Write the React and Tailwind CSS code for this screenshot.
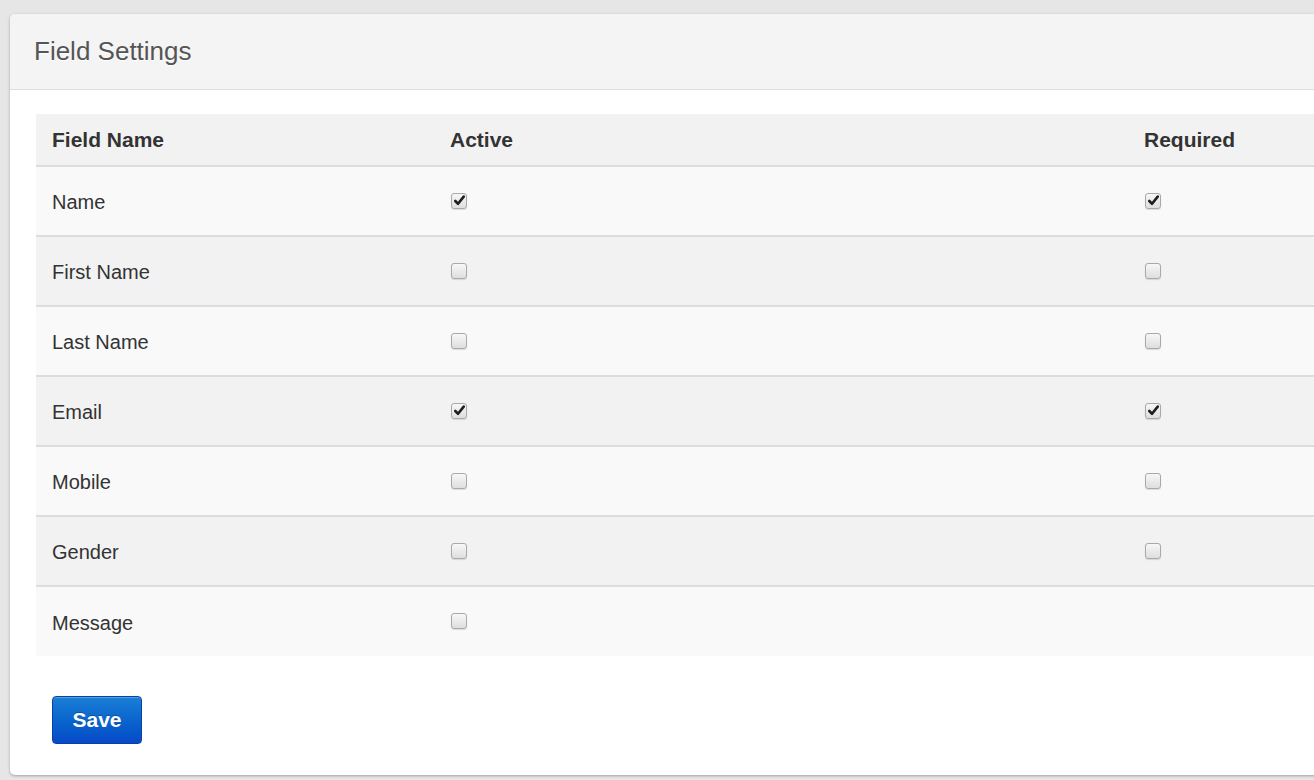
const fields = [
  { name: "Name", active: true, required: true },
  { name: "First Name", active: false, required: false },
  { name: "Last Name", active: false, required: false },
  { name: "Email", active: true, required: true },
  { name: "Mobile", active: false, required: false },
  { name: "Gender", active: false, required: false },
  { name: "Message", active: false, required: null },
];

function Checkbox({ checked }) {
  return (
    <span className="flex h-[16px] w-[16px] items-center justify-center rounded-[3px] border border-[#a9a9a9] bg-gradient-to-b from-[#f7f7f7] to-[#dedede] shadow-[0_1px_1px_rgba(0,0,0,0.12)]">
      {checked && (
        <svg viewBox="0 0 16 16" className="h-[13px] w-[13px]">
          <path d="M2.8 8.6 L6.2 12 L13.2 3.2" fill="none" stroke="#1e1e1e" strokeWidth="3.2" strokeLinecap="round" strokeLinejoin="round" />
        </svg>
      )}
    </span>
  );
}

export default function App() {
  return (
    <div className="h-[780px] w-full overflow-hidden bg-[#e6e6e6] pt-[14px] pl-[10px] font-['Liberation_Sans',Arial,sans-serif] text-[#333]">
      <div className="w-[1340px] rounded-[5px] bg-white shadow-[0_1px_3px_rgba(0,0,0,0.3)]">
        <div className="flex h-[76px] items-center rounded-t-[5px] border-b border-[#dedede] bg-[#f4f4f4] pl-[24px]">
          <h1 className="text-[26px] text-[#555] [text-shadow:0_1px_0_#fff]">Field Settings</h1>
        </div>
        <div className="px-[26px] pt-[24px] pb-[31px]">
          <table className="w-full border-collapse text-[20px]">
            <thead>
              <tr className="h-[52px] bg-[#f2f2f2] text-left text-[21px]">
                <th className="w-[398px] pl-[16px] font-bold">Field Name</th>
                <th className="w-[694px] pl-[16px] font-bold">Active</th>
                <th className="pl-[16px] font-bold">Required</th>
              </tr>
            </thead>
            <tbody>
              {fields.map((f, i) => (
                <tr
                  key={f.name}
                  className={`h-[70px] border-t-2 border-[#dddddd] ${i % 2 === 0 ? "bg-[#f9f9f9]" : "bg-[#f2f2f2]"}`}
                >
                  <td className="pl-[16px] pt-[2px]">{f.name}</td>
                  <td className="pl-[17px]">
                    <div className="-mt-[1px]">
                      <Checkbox checked={f.active} />
                    </div>
                  </td>
                  <td className="pl-[17px]">
                    {f.required !== null && (
                      <div className="-mt-[1px]">
                        <Checkbox checked={f.required} />
                      </div>
                    )}
                  </td>
                </tr>
              ))}
            </tbody>
          </table>
          <div className="mt-[40px] pl-[16px]">
            <button className="h-[48px] w-[90px] rounded-[4px] border border-[#0a3fa6] bg-gradient-to-b from-[#1a7fd4] to-[#0849c7] text-[21px] font-bold text-white shadow-[inset_0_1px_0_rgba(255,255,255,0.25)] [text-shadow:0_-1px_0_rgba(0,0,0,0.25)]">
              Save
            </button>
          </div>
        </div>
      </div>
    </div>
  );
}
